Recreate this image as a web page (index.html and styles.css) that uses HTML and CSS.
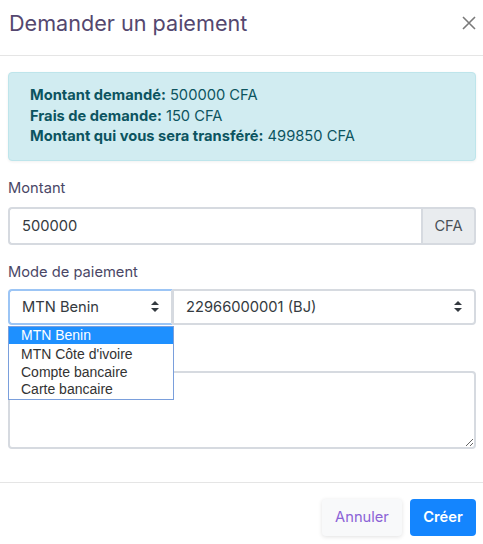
FILE: index.html
```html
<!DOCTYPE html>
<html lang="fr">
<head>
<meta charset="utf-8">
<title>Demander un paiement</title>
<link rel="stylesheet" href="styles.css">
</head>
<body>
<div class="modal">
  <div class="modal-header">
    <h5 class="modal-title">Demander un paiement</h5>
    <svg class="close" width="14" height="14" viewBox="0 0 14 14"><path d="M1 1 L13 13 M13 1 L1 13" stroke="#7a7a7a" stroke-width="1.6"/></svg>
  </div>
  <div class="modal-body">
    <div class="alert">
      <div><b>Montant demandé:</b> 500000 CFA</div>
      <div><b>Frais de demande:</b> 150 CFA</div>
      <div><b>Montant qui vous sera transféré:</b> 499850 CFA</div>
    </div>
    <div class="form-group">
      <label class="label">Montant</label>
      <div class="input-group">
        <div class="control input">500000</div>
        <div class="addon">CFA</div>
      </div>
    </div>
    <div class="form-group">
      <label class="label">Mode de paiement</label>
      <div class="select-row">
        <div class="select-wrap">
          <div class="control select focus">MTN Benin
            <svg class="arrows" width="8" height="11" viewBox="0 0 8 11"><path d="M4 0 L8 4 H0 Z M4 11 L0 7 H8 Z" fill="#343a40"/></svg>
          </div>
          <ul class="dropdown">
            <li class="active">MTN Benin</li>
            <li>MTN Côte d'ivoire</li>
            <li>Compte bancaire</li>
            <li>Carte bancaire</li>
          </ul>
        </div>
        <div class="control select grow">22966000001 (BJ)
          <svg class="arrows" width="8" height="11" viewBox="0 0 8 11"><path d="M4 0 L8 4 H0 Z M4 11 L0 7 H8 Z" fill="#343a40"/></svg>
        </div>
      </div>
    </div>
    <div class="form-group">
      <div class="label-spacer"></div>
      <textarea class="textarea" readonly></textarea>
    </div>
  </div>
  <div class="modal-footer">
    <button class="btn btn-light">Annuler</button>
    <button class="btn btn-primary">Créer</button>
  </div>
</div>
</body>
</html>
```
FILE: styles.css
```css
* { box-sizing: border-box; }
html, body { margin: 0; padding: 0; background: #fff; }
body {
  font-family: Inter, "Noto Sans", sans-serif;
  font-size: 14.7px;
  color: #495057;
  width: 483px;
}
.modal { width: 483px; }
.modal-header {
  display: flex;
  align-items: flex-start;
  justify-content: space-between;
  padding: 8px 7px 0 9px;
  border-bottom: 1px solid #e5e5e5;
  height: 56px;
}
.modal-title {
  margin: 0;
  font-size: 21.6px;
  font-weight: 400;
  color: #54476f;
  line-height: 30px;
}
.close { margin-top: 8px; }
.modal-body { padding: 16px 7px 33px 8px; }
.alert {
  background: #d1ecf1;
  border: 1px solid #bee5eb;
  border-radius: 4px;
  color: #0c5460;
  padding: 12px 20px 13px 21px;
  line-height: 20.5px;
  font-size: 14.7px;
  box-shadow: 0 1px 3px rgba(0,0,0,0.06);
}
.alert b { font-weight: 700; }
.form-group { margin-top: 17px; }
.label {
  display: block;
  color: #4a4766;
  line-height: 21px;
  margin-bottom: 8px;
  font-size: 14.7px;
}
.label-spacer { height: 21px; margin-bottom: 8px; }
.control {
  background: #fff;
  border: 2px solid #d6dae0;
  color: #343a40;
  font-size: 14.7px;
  display: flex;
  align-items: center;
  padding: 0 12px;
}
.input-group { display: flex; height: 38px; }
.input {
  flex: 1;
  border-radius: 4px 0 0 4px;
  border-right: none;
}
.addon {
  width: 55px;
  background: #e9ecef;
  border: 2px solid #d6dae0;
  border-radius: 0 4px 4px 0;
  display: flex;
  align-items: center;
  justify-content: center;
  color: #495057;
}
.select-row { display: flex; height: 36px; margin-top: -2px; }
.select-wrap { position: relative; width: 165px; display: flex; }
.select {
  flex: 1;
  justify-content: space-between;
  padding: 0 12px 0 12px;
}
.select.focus { border-color: #9cc5f5; border-radius: 4px 0 0 4px; border-right-color: #d6dae0; }
.select.grow { border-left-width: 1px; border-radius: 0 4px 4px 0; padding-left: 12px; }
.arrows { flex: none; }
.dropdown {
  position: absolute;
  left: 0;
  top: 37px;
  width: 166px;
  margin: 0;
  padding: 0 0 2px;
  list-style: none;
  background: #fff;
  border: 1px solid #7a9fdc;
  font-family: "Liberation Sans", Arial, sans-serif;
  font-size: 14px;
  color: #333;
  z-index: 2;
}
.dropdown li { height: 17.5px; line-height: 17px; padding-left: 12px; }
.dropdown li + li { line-height: 20px; height: 17.5px; }
.dropdown li.active { background: #1e90ff; color: #fff; }
.textarea {
  display: block;
  width: 100%;
  height: 78px;
  border: 2px solid #d6dae0;
  border-radius: 4px;
  resize: vertical;
  margin: 0;
  font: inherit;
}
.modal-footer {
  border-top: 1px solid #e5e5e5;
  display: flex;
  justify-content: flex-end;
  gap: 8px;
  padding: 16px 7px 8px;
}
.btn {
  height: 37px;
  border: none;
  border-radius: 4px;
  font-family: Inter, "Noto Sans", sans-serif;
  font-size: 14.7px;
  padding: 0 8px;
}
.btn-light {
  width: 80px;
  background: #f8f9fa;
  color: #8b63d6;
  box-shadow: 0 1px 4px rgba(0,0,0,0.12);
}
.btn-primary {
  width: 66px;
  background: #1485fe;
  color: #fff;
  font-weight: 600;
}
```
